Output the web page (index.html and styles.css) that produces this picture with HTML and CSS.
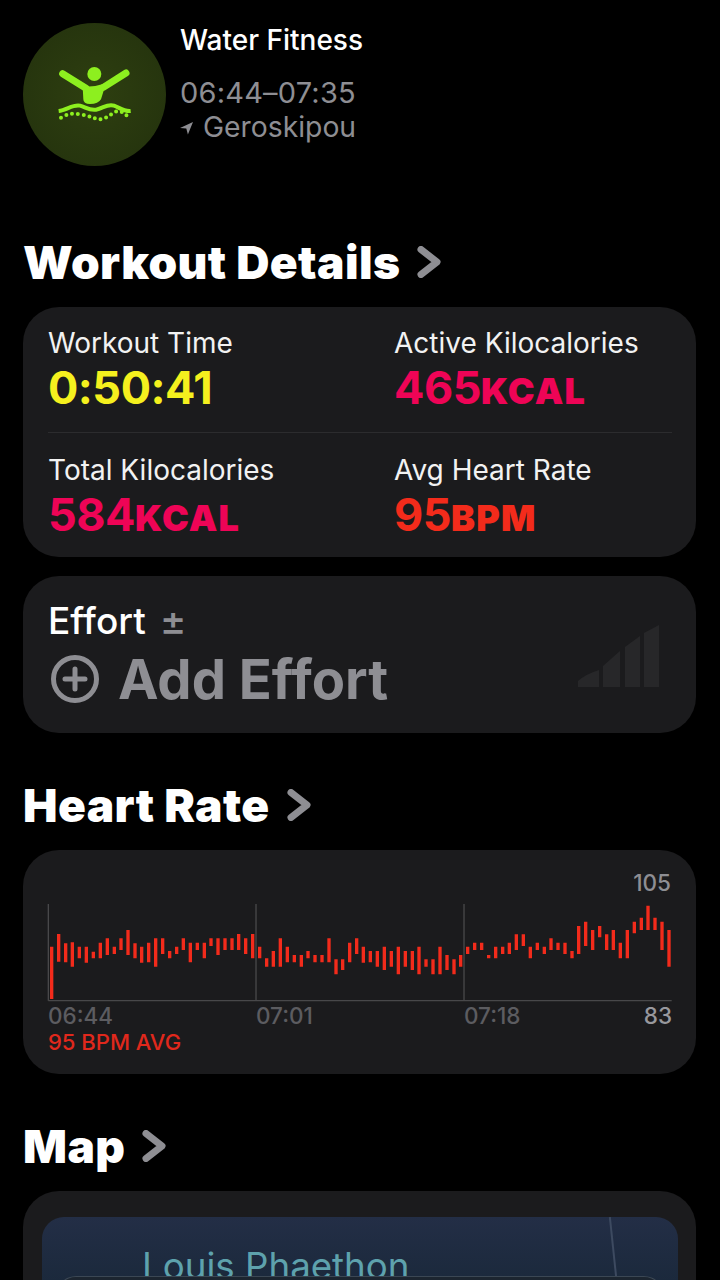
FILE: index.html
```html
<!DOCTYPE html>
<html lang="en">
<head>
<meta charset="utf-8">
<title>Water Fitness</title>
<link rel="stylesheet" href="styles.css">
</head>
<body>
<main class="page">
  <header class="summary">
    <svg class="badge" viewBox="69 69 429 429" aria-hidden="true">
      <defs><radialGradient id="bg" cx="50%" cy="50%" r="50%"><stop offset="0" stop-color="#2e3f10"/><stop offset="1" stop-color="#26350e"/></radialGradient></defs>
      <circle cx="283.5" cy="283.5" r="214.5" fill="url(#bg)"/>
      <circle cx="283" cy="222" r="21" fill="#8def1f"/>
      <path d="M188 221 L258 265 M378 219 L310 262" stroke="#8def1f" stroke-width="21" stroke-linecap="round" fill="none"/>
      <path d="M248 260 Q283 262 318 250 L303 298 Q295 312 270 312 Q250 312 250 298 Z" fill="#8def1f"/>
      <path d="M176 333 C200 330 220 312 240 317 C258 322 268 332 288 329 C310 325 322 310 342 317 C360 324 372 335 392 333" stroke="#8def1f" stroke-width="12" fill="none"/>
      <path d="M183 353 Q208 338 235 342 T285 355 T335 342 T388 356" stroke="#8def1f" stroke-width="12" stroke-linecap="round" stroke-dasharray="0 17.5" fill="none"/>
    </svg>
    <div class="summary-text">
      <p class="activity">Water Fitness</p>
      <p class="meta time">06:44–07:35</p>
      <p class="meta place">
        <svg class="arrow" viewBox="0 0 14 14" aria-hidden="true"><path d="M0 7 L14 0.5 L8.5 14 L6.8 7.6 Z" fill="#8e8e93"/></svg>
        Geroskipou
      </p>
    </div>
  </header>

  <h2 class="section first">Workout Details<svg class="chev" viewBox="0 0 24 32" aria-hidden="true"><path d="M4 3.5 L20 16 L4 28.5" /></svg></h2>
  <section class="card stats">
    <div class="stat-row">
      <div class="stat"><p class="label">Workout Time</p><p class="value yellow">0:50:41</p></div>
      <div class="stat"><p class="label">Active Kilocalories</p><p class="value pink">465<span class="unit">KCAL</span></p></div>
    </div>
    <div class="stat-row">
      <div class="stat"><p class="label">Total Kilocalories</p><p class="value pink">584<span class="unit">KCAL</span></p></div>
      <div class="stat"><p class="label">Avg Heart Rate</p><p class="value red">95<span class="unit">BPM</span></p></div>
    </div>
  </section>

  <section class="card effort">
    <p class="effort-title">Effort<span class="plusminus">±</span></p>
    <div class="effort-row">
      <svg class="add" viewBox="0 0 48 48" aria-hidden="true"><circle cx="24" cy="24" r="21.5" /><path d="M24 14 V34 M14 24 H34" /></svg>
      <span class="add-text">Add Effort</span>
      <svg class="signal" viewBox="0 0 82 62" aria-hidden="true"><path d="M0 62 V56 Q8 49 21 45 V62 Z M25 62 V41 L42 26 V62 Z M47 62 V22 L62 11 V62 Z M66 62 V8 L81 0 V62 Z" fill="#272729"/></svg>
    </div>
  </section>

  <h2 class="section">Heart Rate<svg class="chev" viewBox="0 0 24 32" aria-hidden="true"><path d="M4 3.5 L20 16 L4 28.5" /></svg></h2>
  <section class="card heart">
    <p class="hr-max">105</p>
    <svg class="chart" viewBox="81 159 1875 300" aria-hidden="true">
      <g class="axis">
        <path d="M85 162 V452 M708 162 V452 M1332 162 V452 M85 452 H1955" />
      </g>
      <path class="bars" d="M95 290V447M116 252V335M137 280V337M157 277V350M178 290V325M199 290V338M220 305V325M241 278V325M262 265V315M283 290V312M303 265V300M324 240V315M345 280V325M365 290V338M386 278V337M407 265V350M428 265V312M449 303V325M470 290V312M490 265V300M511 278V337M532 278V300M553 278V325M573 265V288M594 265V315M615 265V300M636 265V300M656 252V300M677 265V312M698 252V325M719 290V325M740 325V350M760 303V350M781 265V350M802 290V337M823 315V337M844 315V350M864 303V325M885 315V337M906 315V337M927 265V337M948 328V373M968 328V360M989 278V337M1010 265V312M1030 290V338M1051 303V337M1072 303V350M1093 290V360M1114 303V350M1135 290V373M1156 303V350M1177 303V360M1197 290V373M1218 328V350M1239 328V373M1260 290V373M1281 315V360M1302 328V373M1322 315V350M1343 290V312M1364 278V300M1385 278V300M1406 315V325M1427 290V325M1448 290V312M1468 278V312M1489 253V300M1510 253V288M1531 290V325M1552 278V300M1573 290V312M1593 265V300M1614 278V300M1635 278V312M1656 303V325M1676 228V312M1697 215V288M1718 240V300M1739 228V262M1760 253V300M1780 240V300M1801 278V325M1822 240V325M1843 215V250M1864 203V240M1884 167V240M1905 203V240M1926 215V300M1947 240V350"/>
    </svg>
    <div class="ticks">
      <span class="tick">06:44</span>
      <span class="tick">07:01</span>
      <span class="tick">07:18</span>
      <span class="tick-min">83</span>
    </div>
    <p class="avg">95 BPM AVG</p>
  </section>

  <h2 class="section">Map<svg class="chev" viewBox="0 0 24 32" aria-hidden="true"><path d="M4 3.5 L20 16 L4 28.5" /></svg></h2>
  <section class="card map">
    <div class="map-view">
      <span class="map-road"></span>
      <p class="map-label">Louis Phaethon</p>
      <div class="map-panel"></div>
    </div>
  </section>
</main>
</body>
</html>
```

FILE: styles.css
```css
* { box-sizing: border-box; }
html, body { margin: 0; padding: 0; background: #000; }
body { width: 720px; height: 1280px; overflow: hidden; font-family: Inter, "Liberation Sans", sans-serif; color: #fff; }
p, h2 { margin: 0; }
.page { padding: 23px 24px 0 23px; }

.summary { display: flex; gap: 14px; align-items: flex-start; height: 143px; }
.badge { width: 143px; height: 143px; flex: none; }
.summary-text { display: flex; flex-direction: column; }
.activity { font-size: 28px; font-weight: 500; line-height: 36px; margin-top: -1px; }
.meta { font-size: 29px; line-height: 36px; color: #8e8e93; font-weight: 400; }
.time { margin-top: 17px; letter-spacing: 0.2px; }
.place { margin-top: -2px; display: flex; align-items: center; gap: 10px; font-size: 28.3px; }
.arrow { width: 13px; height: 14px; margin-top: 2px; }

.section { font-size: 46px; font-weight: 900; line-height: 50px; letter-spacing: 0.4px; margin: 47px 0 20px; display: flex; align-items: center; gap: 17px; }
.section.first { margin-top: 71px; }
.chev { width: 24px; height: 32px; }
.chev path { fill: none; stroke: #8e8e93; stroke-width: 7; stroke-linecap: round; stroke-linejoin: round; }

.card { background: #1b1b1d; border-radius: 36px; width: 673px; }
.stats { height: 250px; padding: 18px 24px 0 25px; margin-bottom: 19px; }
.stat-row { display: grid; grid-template-columns: 346px 1fr; }
.stat-row + .stat-row { border-top: 1px solid #2c2c2e; margin-top: 19px; padding-top: 19px; }
.label { font-size: 28px; line-height: 36px; font-weight: 400; color: #f2f2f2; }
.value { font-size: 45px; line-height: 50px; font-weight: 700; letter-spacing: -0.5px; margin-top: 2px; }
.unit { font-size: 36px; line-height: 1; font-weight: 900; letter-spacing: 1.2px; }
.yellow { color: #f5f01e; }
.pink { color: #ee0456; }
.red { color: #f32b1b; }

.effort { height: 157px; padding: 25px 26px 0 27px; }
.effort-title { font-size: 37px; line-height: 40px; font-weight: 500; display: flex; gap: 14px; align-items: center; margin-left: -2px; }
.plusminus { color: #8e8e93; font-size: 40px; font-weight: 500; }
.effort-row { display: flex; align-items: center; gap: 19px; margin-top: 10px; height: 56px; padding-left: 1px; }
.add { width: 48px; height: 48px; flex: none; }
.add circle, .add path { fill: none; stroke: #8e8e93; stroke-width: 5; stroke-linecap: round; }
.add-text { font-size: 54.4px; font-weight: 700; color: #8e8e93; line-height: 56px; }
.signal { width: 82px; height: 62px; margin-left: auto; margin-right: 10px; align-self: flex-start; margin-top: -26px; }

.heart { height: 224px; padding: 20px 24px 0 24px; }
.hr-max { font-size: 22.5px; line-height: 26px; color: #8e8e93; text-align: right; padding-right: 1px; font-weight: 500; }
.chart { display: block; width: 625px; height: 100px; margin-top: 7px; }
.axis path { stroke: #48484a; stroke-width: 4; fill: none; }
.bars { stroke: #f32b1b; stroke-width: 10; fill: none; }
.ticks { display: grid; grid-template-columns: 208px 208px 1fr auto; padding-left: 1px; font-size: 22.5px; line-height: 26px; font-weight: 500; }
.tick { color: #5c5c60; }
.tick-min { color: #98989d; }
.avg { font-size: 22px; line-height: 26px; font-weight: 500; color: #e0281c; padding-left: 1px; }

.map { height: 90px; padding: 26px 18px 0 19px; border-radius: 36px 36px 0 0; overflow: hidden; }
.map-view { position: relative; height: 64px; border-radius: 22px 22px 0 0; background: linear-gradient(#232e46, #1b293c); overflow: hidden; }
.map-road { position: absolute; left: 570px; top: 0; width: 2px; height: 60px; background: #3d4a60; transform: rotate(-6deg); }
.map-label { position: absolute; left: 100px; top: 29px; font-size: 36.7px; line-height: 40px; color: #5ea2ad; font-weight: 400; }
.map-panel { position: absolute; left: 14px; right: 14px; top: 59px; height: 20px; background: #1c2530; border: 1px solid #3b4754; border-radius: 20px 20px 0 0; }
```
